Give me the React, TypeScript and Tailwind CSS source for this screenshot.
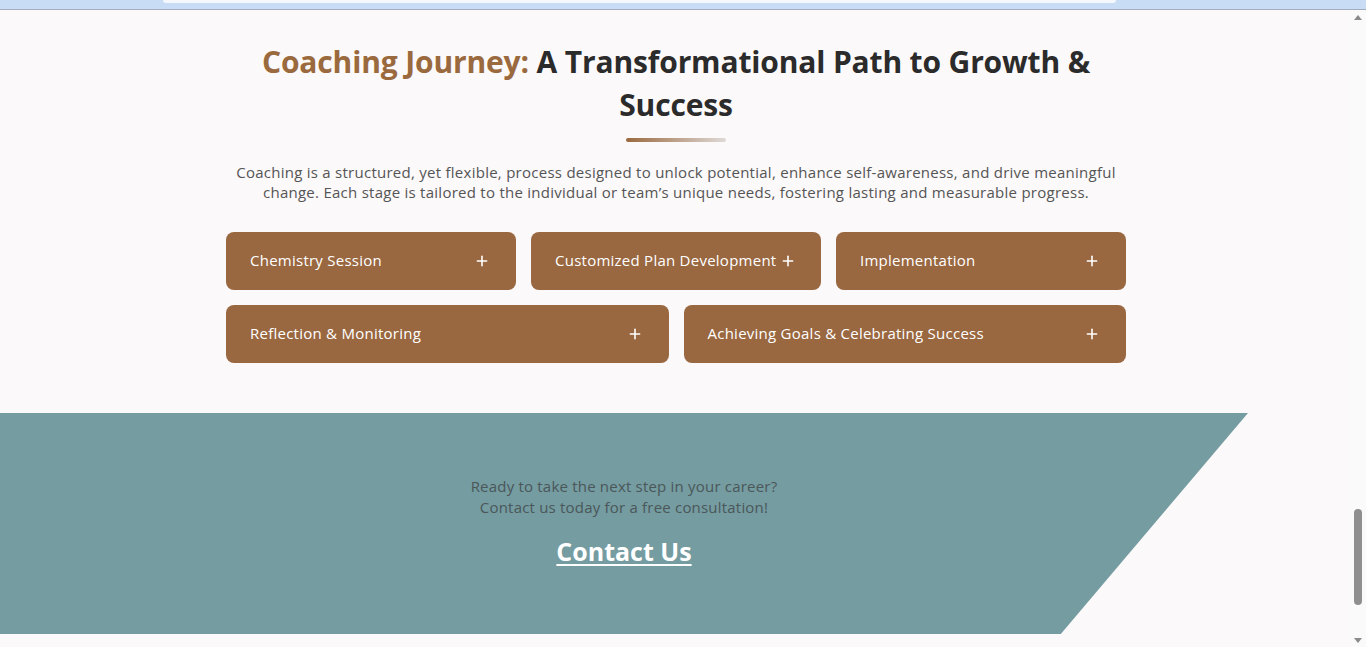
import { Plus } from "lucide-react"

const steps = [
    { title: "Chemistry Session", span: "col-span-2" },
    { title: "Customized Plan Development", span: "col-span-2" },
    { title: "Implementation", span: "col-span-2" },
    { title: "Reflection & Monitoring", span: "col-span-3" },
    { title: "Achieving Goals & Celebrating Success", span: "col-span-3" },
]

export default function App() {
    return (
        <div className="h-[647px] overflow-hidden bg-[#fbf9fa] font-['Open_Sans',sans-serif] flex flex-col">
            {/* browser strip */}
            <div className="h-[10px] shrink-0 bg-[#c9dcf5] border-b border-[#a3acbd] relative">
                <div className="absolute left-[163px] right-[250px] top-0 h-[3px] bg-[#f4f7fc] rounded-b-[6px]" />
            </div>

            <div className="flex flex-1 min-h-0">
                <div className="flex-1 min-w-0">
                    {/* journey section */}
                    <section className="w-[902px] mx-auto pt-[30px] pl-[2px]">
                        <h2 className="text-center text-[30px] leading-[43px] font-bold text-[#2b2b2b] tracking-[-0.15px] px-[20px]">
                            <span className="text-[#9a6a3e]">Coaching Journey:</span> A Transformational Path to Growth &amp; Success
                        </h2>
                        <div className="mx-auto mt-[12px] h-[4px] w-[100px] rounded-full bg-gradient-to-r from-[#9a6a3e] to-[#dedad8]" />
                        <p className="mt-[20px] text-center text-[15px] leading-[20px] tracking-[0.26px] text-[#555555]">
                            Coaching is a structured, yet flexible, process designed to unlock potential, enhance self-awareness, and drive meaningful change. Each stage is tailored to the individual or team’s unique needs, fostering lasting and measurable progress.
                        </p>

                        <div className="mt-[30px] grid grid-cols-6 gap-[15px]">
                            {steps.map((s) => (
                                <button
                                    key={s.title}
                                    className={`${s.span} h-[58px] rounded-[8px] bg-[#996740] pl-[24px] pr-[26px] flex items-center justify-between gap-[4px] text-white text-[15px] tracking-[0.25px] font-medium text-left`}
                                >
                                    <span className="whitespace-nowrap -mt-[2px]">{s.title}</span>
                                    <Plus className="h-[16px] w-[16px] shrink-0" strokeWidth={2.4} />
                                </button>
                            ))}
                        </div>
                    </section>

                    {/* contact banner */}
                    <section className="mt-[50px] w-[1248px] h-[221px] bg-[#749ca1] [clip-path:polygon(0_0,100%_0,85%_100%,0_100%)] flex flex-col items-center pt-[63px]">
                        <p className="text-center text-[15px] leading-[21px] tracking-[0.2px] text-[#4b5759]">
                            Ready to take the next step in your career?
                            <br />
                            Contact us today for a free consultation!
                        </p>
                        <a href="#" className="mt-[17px] text-[25px] leading-[32px] font-bold text-white underline underline-offset-[3px] decoration-[2px]">
                            Contact Us
                        </a>
                    </section>
                </div>

                {/* scrollbar */}
                <div className="w-[16px] shrink-0 bg-[#fafafa] relative">
                    <div className="absolute left-[4px] top-[5px] w-0 h-0 border-l-[4px] border-r-[4px] border-b-[5px] border-l-transparent border-r-transparent border-b-[#8a8a8a]" />
                    <div className="absolute left-[4px] top-[499px] w-[8px] h-[96px] rounded-full bg-[#8f8f8f]" />
                    <div className="absolute left-[4px] top-[628px] w-0 h-0 border-l-[4px] border-r-[4px] border-t-[5px] border-l-transparent border-r-transparent border-t-[#8a8a8a]" />
                </div>
            </div>
        </div>
    )
}
